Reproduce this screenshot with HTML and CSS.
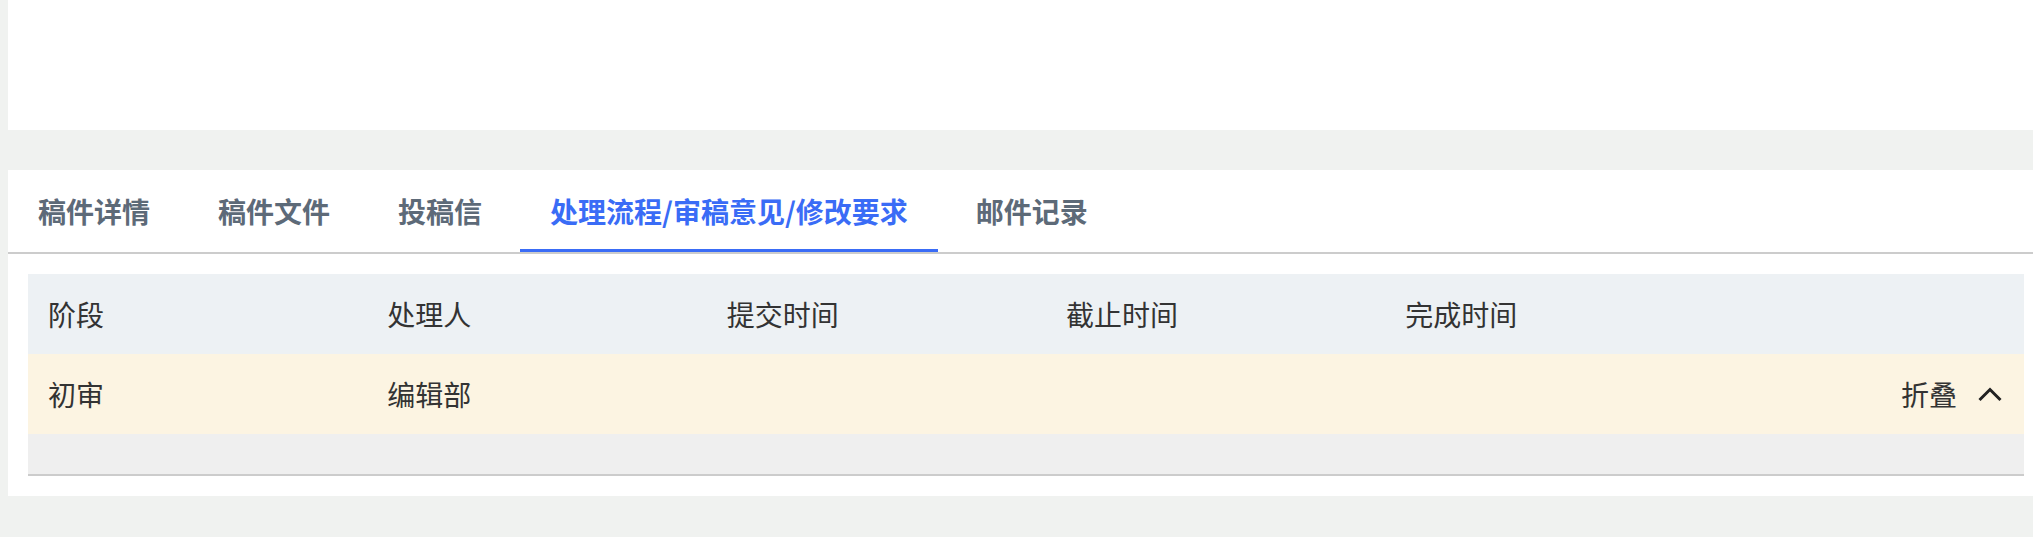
FILE: index.html
```html
<!DOCTYPE html>
<html lang="zh-CN">
<head>
    <meta charset="UTF-8">
    <title>稿件处理流程</title>
    <link rel="stylesheet" href="styles.css">
</head>
<body>

    <div class="panel panel-top"></div>

    <div class="panel panel-main">
        <ul class="tabs">
            <li class="tab">稿件详情</li>
            <li class="tab">稿件文件</li>
            <li class="tab">投稿信</li>
            <li class="tab active">处理流程/审稿意见/修改要求</li>
            <li class="tab">邮件记录</li>
        </ul>

        <div class="flow-table">
            <div class="row row-head">
                <div class="cell">阶段</div>
                <div class="cell">处理人</div>
                <div class="cell">提交时间</div>
                <div class="cell">截止时间</div>
                <div class="cell">完成时间</div>
                <div class="cell"></div>
            </div>
            <div class="row row-stage">
                <div class="cell">初审</div>
                <div class="cell">编辑部</div>
                <div class="cell"></div>
                <div class="cell"></div>
                <div class="cell"></div>
                <div class="cell cell-toggle">
                    <span>折叠</span>
                    <svg class="chevron" width="24" height="16" viewBox="0 0 24 16">
                        <polyline points="1.5,14 12,3.5 22.5,14" fill="none" stroke="#222" stroke-width="3"/>
                    </svg>
                </div>
            </div>
            <div class="row-detail"></div>
        </div>
    </div>

</body>
</html>
```
FILE: styles.css
```css
*{
    padding: 0;
    margin: 0;
    box-sizing: border-box;
}
html, body{
    overflow: hidden;
}
body{
    background: #f0f2f0;
    padding-left: 8px;
    font-family: "Noto Sans CJK SC", "Noto Sans", sans-serif;
    color: #333;
}
.panel{
    background: #fff;
}
.panel-top{
    height: 130px;
    margin-bottom: 40px;
}
.panel-main{
    padding: 0 9px 20px 20px;
}

/* 顶部标签 */
.tabs{
    list-style: none;
    display: flex;
    gap: 8px;
    height: 84px;
    margin-left: -20px;
    margin-right: -9px;
    border-bottom: 2px solid #ccc;
}
.tab{
    padding: 0 30px;
    height: 82px;
    line-height: 82px;
    font-size: 28px;
    font-weight: bold;
    color: #5d6a78;
    white-space: nowrap;
}
.tab.active{
    color: #3a6cf6;
    border-bottom: 3px solid #3a6cf6;
}

/* 流程表格 */
.flow-table{
    margin-top: 20px;
    border-bottom: 2px solid #ccc;
}
.row{
    display: grid;
    grid-template-columns: repeat(5, 17%) 1fr;
    height: 80px;
    align-items: center;
    font-size: 28px;
}
.row-head{
    background: #edf1f4;
}
.row-stage{
    background: #fcf4e2;
}
.cell{
    padding-left: 20px;
    white-space: nowrap;
}
.cell-toggle{
    display: flex;
    align-items: center;
    justify-content: flex-end;
    gap: 21px;
    padding-right: 22px;
}
.chevron{
    display: block;
}
.row-detail{
    height: 40px;
    background: #efefef;
}
```
